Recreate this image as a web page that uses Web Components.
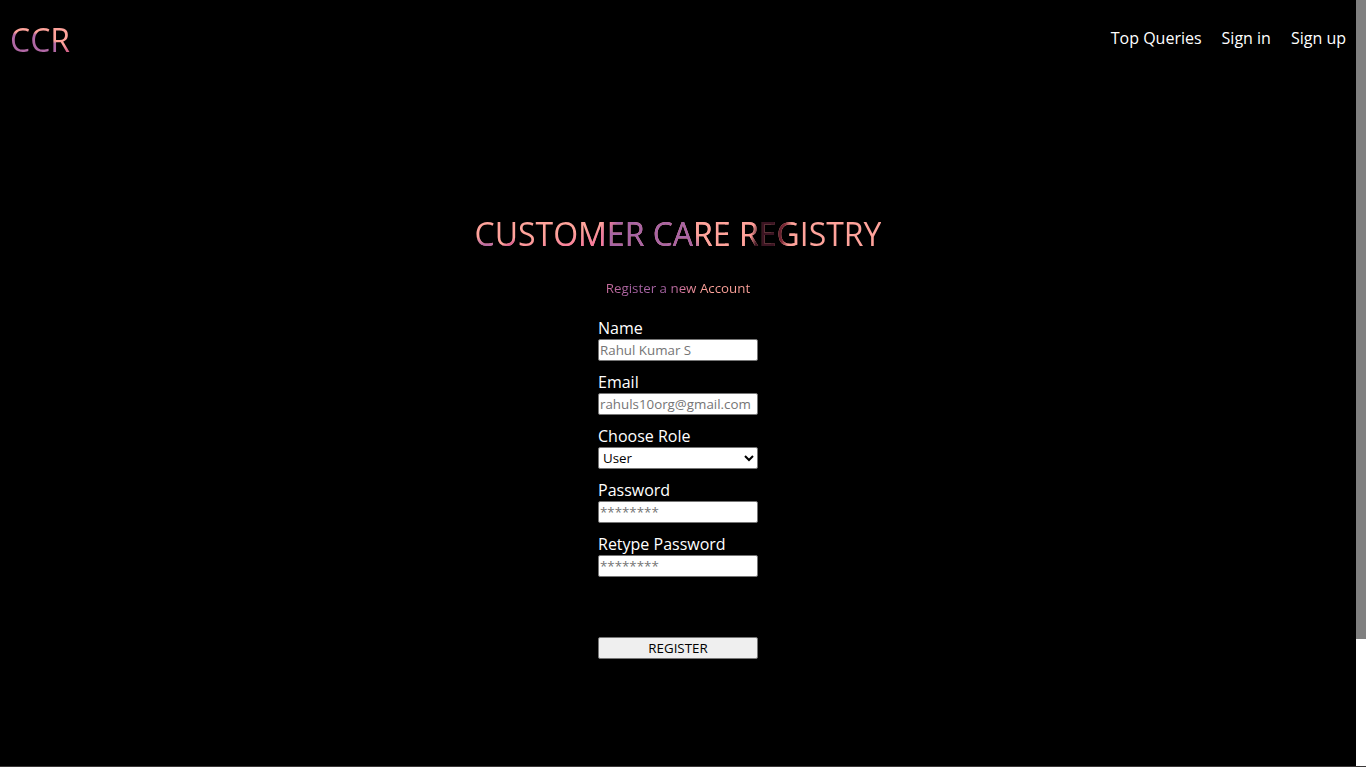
<!DOCTYPE html>
<html lang="en">
<head>
<meta charset="utf-8">
<title>Customer Care Registry</title>
<style>
  html, body { height: 100%; margin: 0; }
  body { background: #000; color: #fff; font: 16px/22px "Open Sans", "Noto Sans", sans-serif; overflow: hidden; }
</style>
</head>
<body>
<ccr-shell>
  <ccr-header slot="header">
    <a href="#queries">Top Queries</a>
    <a href="#signin">Sign in</a>
    <a href="#signup">Sign up</a>
  </ccr-header>
  <ccr-register></ccr-register>
</ccr-shell>

<script>
function define(name, html, setup) {
  const template = document.createElement('template');
  template.innerHTML = html;
  customElements.define(name, class extends HTMLElement {
    constructor() {
      super();
      this.attachShadow({ mode: 'open' }).append(template.content.cloneNode(true));
    }
    connectedCallback() { if (setup) setup(this, this.shadowRoot); }
  });
}

define('ccr-scrollbar', `
  <style>
    :host { display: flex; flex-direction: column; width: 10px; background: #fff; }
    .thumb { flex: 0 0 83.4%; background: #808080; }
  </style>
  <div class="thumb"></div>`);

define('ccr-shell', `
  <style>
    :host { display: flex; height: 100vh; box-sizing: border-box; border-bottom: 1px solid #3b3838; }
    .page { flex: 1; min-width: 0; }
  </style>
  <div class="page"><slot name="header"></slot><slot></slot></div>
  <ccr-scrollbar></ccr-scrollbar>`);

define('ccr-header', `
  <style>
    :host { display: flex; justify-content: space-between; align-items: flex-start; padding: 18px 10px 16px; }
    .logo {
      font-size: 32px; line-height: 44px; color: transparent;
      background: linear-gradient(to bottom, #ffa39b 0 32%, #b168a5 38%) 0 0 / 39px 100% no-repeat,
                  linear-gradient(to bottom, #ffa39b 0 52%, #b168a5 58%) 39px 0 / 7px 100% no-repeat,
                  linear-gradient(to bottom, #ffa39b 0 60%, #d9668c 74%) 46px 0 / 100% 100% no-repeat;
      -webkit-background-clip: text; background-clip: text;
    }
    nav { display: flex; gap: 20px; padding-top: 9px; }
    ::slotted(a) { color: #fff; text-decoration: none; }
  </style>
  <div class="logo">CCR</div>
  <nav><slot></slot></nav>`);

define('ccr-field', `
  <style>
    :host { display: flex; flex-direction: column; }
    input, select {
      box-sizing: border-box; width: 100%; height: 22px; margin: 0;
      font-family: "Open Sans", "Noto Sans", sans-serif; color: #000; background: #fff;
      border: 1px solid #767676; border-radius: 2px;
    }
    input { padding: 1px; }
    input::placeholder { color: #757575; }
    select { padding: 0; }
  </style>
  <label for="control"></label>`, (host, root) => {
  if (root.getElementById('control')) return;
  root.querySelector('label').textContent = host.getAttribute('label');
  const options = host.getAttribute('options');
  const control = document.createElement(options ? 'select' : 'input');
  control.id = 'control';
  if (options) {
    options.split(',').forEach(text => control.add(new Option(text)));
  } else {
    control.type = host.getAttribute('type') || 'text';
    control.placeholder = host.getAttribute('placeholder');
  }
  root.append(control);
});

define('ccr-register', `
  <style>
    :host { display: flex; flex-direction: column; align-items: center; padding-top: 134px; }
    h1, h2 { margin: 0; font-weight: 400; color: transparent; }
    h1 {
      font-size: 32px; line-height: 44px;
      background:
        linear-gradient(to bottom, transparent 56%, #b566a3 76%) 0 0 / 20px 100% no-repeat,
        linear-gradient(150deg, transparent 72%, #d9628f 78%) 0 0 / 40px 100% no-repeat,
        linear-gradient(170deg, transparent 55%, #f77b9b 78%) 0 0 / 128px 100% no-repeat,
        linear-gradient(125deg, #ffa39b 0 14%, #e5799b 28%, #a864a4 40%) 124px 0 / 36px 100% no-repeat,
        linear-gradient(65deg, #a864a4 50%, #ffa39b 60%) 190px 0 / 50px 100% no-repeat,
        linear-gradient(#a864a4, #a864a4) 160px 0 / 30px 100% no-repeat,
        linear-gradient(105deg, #ffa39b 0 40%, #ff9a96 52%, #3b1422 64%) 250px 0 / 50px 100% no-repeat,
        linear-gradient(100deg, #3b1422 20%, #7c2634 50%, #ffa39b 72%) 296px 0 / 24px 100% no-repeat,
        linear-gradient(#ffa39b, #ffa39b);
      -webkit-background-clip: text; background-clip: text;
    }
    h2 {
      margin: 23px 0 19px; font-size: smaller; line-height: 19px;
      background: linear-gradient(100deg, #c86c99 0, #a864a4 18% 42%, #d9789c 55%, #ffa39b 66%);
      -webkit-background-clip: text; background-clip: text;
    }
    form { display: flex; flex-direction: column; gap: 10px; width: 160px; }
    button {
      height: 22px; margin-top: 50px; padding: 0; border: 1px solid #767676; border-radius: 2px;
      font-family: "Open Sans", "Noto Sans", sans-serif; color: #000; background: #efefef;
    }
  </style>
  <h1>CUSTOMER CARE REGISTRY</h1>
  <h2>Register a new Account</h2>
  <form>
    <ccr-field label="Name" placeholder="Rahul Kumar S"></ccr-field>
    <ccr-field label="Email" type="email" placeholder="rahuls10org@gmail.com"></ccr-field>
    <ccr-field label="Choose Role" options="User,Agent"></ccr-field>
    <ccr-field label="Password" type="password" placeholder="********"></ccr-field>
    <ccr-field label="Retype Password" type="password" placeholder="********"></ccr-field>
    <button type="button">REGISTER</button>
  </form>`);
</script>
</body>
</html>
